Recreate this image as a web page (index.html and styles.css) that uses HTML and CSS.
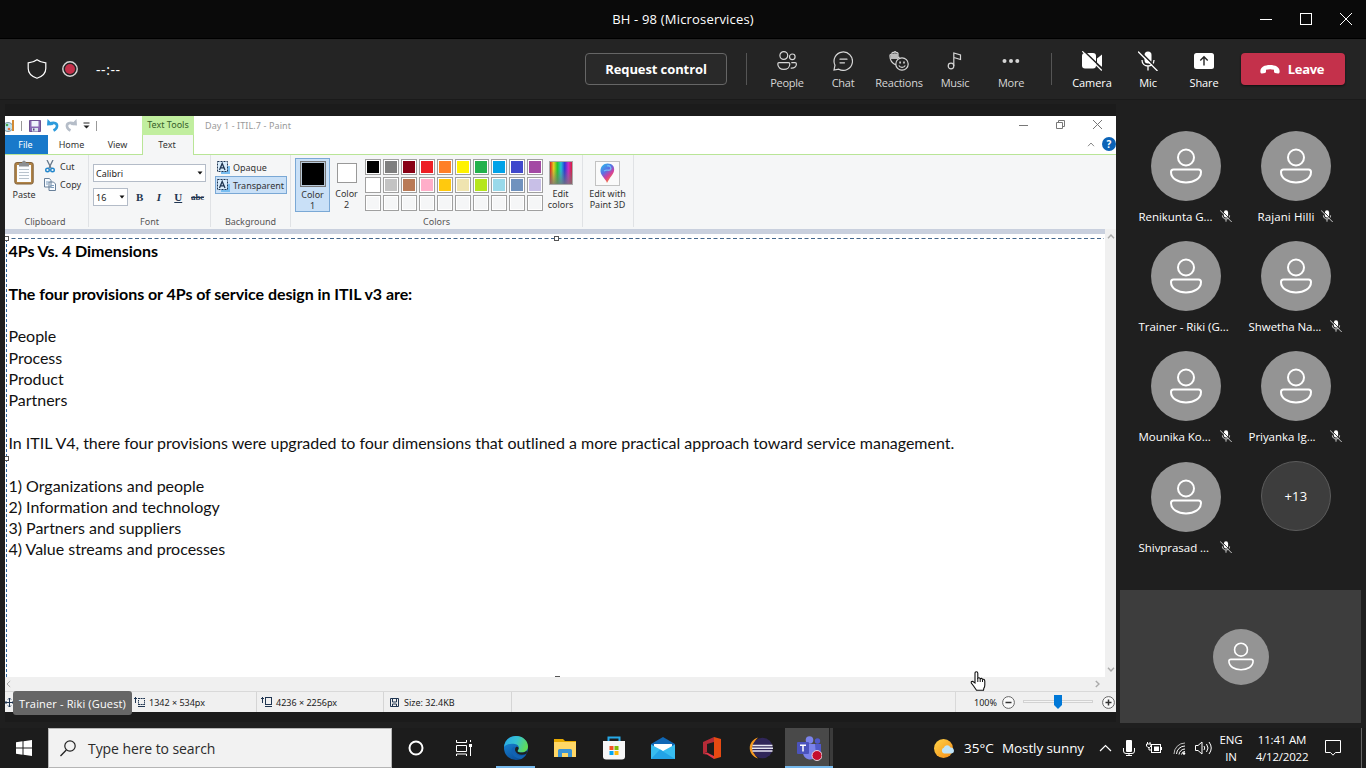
FILE: index.html
```html
<!DOCTYPE html>
<html lang="en">
<head>
<meta charset="utf-8">
<title>BH - 98 (Microservices)</title>
<link rel="stylesheet" href="styles.css">
</head>
<body>
<svg class="defs" width="0" height="0">
  <symbol id="person" viewBox="0 0 32 36"><g fill="none" stroke="#fff" stroke-width="2"><circle cx="16" cy="9.500" r="8"/><path d="M3.500 21.500h25q2.500 0 2.500 2.500c0 6.500-7 10.500-15 10.500S1 30.500 1 24q0-2.500 2.500-2.500z"/></g></symbol>
  <symbol id="micoff" viewBox="0 0 20 20"><rect x="6.500" y="0.500" width="7" height="12" rx="3.500" fill="#fff"/><path d="M4 9c0 8 12 8 12 0M10 15.500V19.500" fill="none" stroke="#fff" stroke-width="1.300"/><path d="M1.500 0L20.500 19" stroke="#242424" stroke-width="1.600"/><path d="M0 0.500L19.500 20" stroke="#fff" stroke-width="1.300"/></symbol>
  <symbol id="dropdown" viewBox="0 0 6 4"><path d="M0.500 0.500h5L3 3.500z" fill="#111"/></symbol>
  <symbol id="bgmode" viewBox="0 0 13 13"><path d="M7 5h6v8H4V9z" fill="#78bdf0"/><rect x="0.500" y="0.500" width="10" height="10" fill="#d9ecfb" stroke="#1f3551" stroke-dasharray="2 1"/><path d="M2.500 9L5.200 2.500L8 9M3.500 6.800h3.500" stroke="#1f3551" stroke-width="1.300" fill="none"/></symbol>
</svg>

<header class="titlebar">
  <div class="title">BH - 98 (Microservices)</div>
  <div class="winbtns">
    <svg width="12" height="12"><path d="M0 6.500h12" stroke="#fff"/></svg>
    <svg width="12" height="12"><rect x="0.500" y="0.500" width="11" height="11" fill="none" stroke="#fff"/></svg>
    <svg width="12" height="12"><path d="M0 0L12 12M12 0L0 12" stroke="#fff"/></svg>
  </div>
</header>

<nav class="toolbar">
  <div class="state">
    <svg width="20" height="20" viewBox="0 0 20 20"><path d="M10 0.800C7.500 2.800 4.500 3.600 1.200 3.800V9.500c0 5 3.500 8 8.800 9.800 5.300-1.800 8.800-4.800 8.800-9.800V3.800C15.500 3.600 12.500 2.800 10 0.800z" fill="none" stroke="#fff" stroke-width="1.200"/></svg>
    <svg width="16" height="16"><circle cx="8" cy="8" r="7.200" fill="none" stroke="#d8d8d8" stroke-width="1.400"/><circle cx="8" cy="8" r="5" fill="#c4314b"/></svg>
    <span class="timer">--:--</span>
  </div>
  <button class="request">Request control</button>
  <i class="vline"></i>
  <div class="tools">
    <div class="tool"><svg width="20" height="20" viewBox="0 0 20 20" fill="none" stroke="#d6d6d6" stroke-width="1.200"><circle cx="6.800" cy="4.500" r="3.900"/><circle cx="15.300" cy="5.800" r="2.800"/><path d="M2 11.600h9.500q1.300 0 1.300 1.300c0 3.400-2.700 5.500-6 5.500s-6-2.100-6-5.500q0-1.300 1.200-1.300zM14.300 11.600h3.800q1.300 0 1.300 1.300c0 3-2.300 4.700-5.700 4.200"/></svg><span>People</span></div>
    <div class="tool"><svg width="20" height="20" viewBox="0 0 20 20" fill="none" stroke="#d6d6d6" stroke-width="1.200" stroke-linecap="round"><path d="M1 19l1-4.800A9.200 9.200 0 1 1 5.800 18.200z"/><path d="M7 8.200h7M7 11.800h4.500"/></svg><span>Chat</span></div>
    <div class="tool"><svg width="20" height="20" viewBox="0 0 20 20" fill="none" stroke="#d6d6d6" stroke-width="1.200"><path d="M7 14C3.500 12.500 1 10 1 5.500V4q1-1.500 2 0V2q1-1.500 2 0V1.200q1.200-1 2 0V2q1.500-1 2 0.500V7l1.500-1"/><path d="M1.500 3h7.500v5H1.500z" fill="#bbb" stroke="none"/><circle cx="13" cy="13" r="6.200"/><path d="M9.800 14.500c1.500 2.500 5 2.500 6.500 0"/><path d="M10.300 11.500h1.600M14.200 11.500h1.600" stroke-width="1.800"/></svg><span>Reactions</span></div>
    <div class="tool"><svg width="20" height="20" viewBox="0 0 20 20" fill="none" stroke="#d6d6d6" stroke-width="1.200"><circle cx="6" cy="15" r="2.800"/><path d="M8.800 15V2l6.700 2v4.500L8.800 6.500"/></svg><span>Music</span></div>
    <div class="tool"><svg width="20" height="20" viewBox="0 0 20 20" fill="#d6d6d6"><circle cx="3.500" cy="10" r="2"/><circle cx="10" cy="10" r="2"/><circle cx="16.300" cy="10" r="2"/></svg><span>More</span></div>
  </div>
  <i class="vline second"></i>
  <div class="tools bright">
    <div class="tool"><svg width="20" height="20" viewBox="0 0 20 20"><rect x="0" y="2" width="14" height="15.500" rx="3" fill="#fff"/><path d="M15 7.500L20 3.500v12.500l-5-3.500z" fill="#fff"/><path d="M1.800 0L20.500 18" stroke="#242424" stroke-width="1.700"/><path d="M0.300 0.300L19.800 19.500" stroke="#fff" stroke-width="1.200"/></svg><span>Camera</span></div>
    <div class="tool"><svg width="20" height="20"><use href="#micoff"/></svg><span>Mic</span></div>
    <div class="tool"><svg width="20" height="20"><rect y="2" width="20" height="16" rx="2.500" fill="#fff"/><path d="M10 14.500V6M6.300 9.500L10 5.800l3.700 3.700" fill="none" stroke="#242424" stroke-width="1.400"/></svg><span>Share</span></div>
  </div>
  <button class="leave"><svg width="20" height="9" viewBox="0 0 20 9"><path d="M0.500 7.500C-0.500 2.500 4 0 10 0s10.500 2.500 9.500 7.500q-.3 1.300-1.500 1l-3-.6q-1-.3-1-1.200V4.800Q10 3.600 6 4.800v1.900q0 .9-1 1.200l-3 .6q-1.200.3-1.500-1z" fill="#fff"/></svg><span>Leave</span></button>
</nav>

<main class="meeting">
  <section class="stage">
    <div class="paint">
      <div class="ptitle">
        <div class="quick">
          <svg width="10" height="14" viewBox="0 0 10 14"><ellipse cx="3" cy="8" rx="5" ry="4.500" fill="#bfe3f0" stroke="#7b95a3"/><circle cx="2" cy="6" r="1.300" fill="#47a84c"/><circle cx="4" cy="10" r="1.300" fill="#e57342"/><path d="M8 1v11" stroke="#d38a35" stroke-width="2"/></svg>
          <i class="tick"></i>
          <svg class="save" width="12" height="12"><path d="M0.500 0.500h11v11h-11z" fill="#8a68b4" stroke="#6d5192"/><path d="M2.500 1h7v5.500h-7z" fill="#eef3fb"/><path d="M3 8h6v3.500H3z" fill="#d8e5ee"/><path d="M4 8.500h1.500v2H4z" fill="#553c7b"/></svg>
          <svg width="12" height="13" viewBox="0 0 12 13"><path d="M2.500 5c5-2.500 8-.5 7.500 2.500-.3 2-1.500 3-3.500 4" fill="none" stroke="#2d9bdc" stroke-width="2.600"/><path d="M0 6.500L0.500 0l6 6z" fill="#2d9bdc"/></svg>
          <svg width="12" height="13" viewBox="0 0 12 13"><path d="M9.500 5c-5-2.500-8-.5-7.500 2.500.3 2 1.500 3 3.500 4" fill="none" stroke="#b5bdc8" stroke-width="2.600"/><path d="M12 6.500L11.500 0 5.500 6z" fill="#b5bdc8"/></svg>
          <svg class="qmore" width="7" height="7"><path d="M0.500 1h6" stroke="#222"/><path d="M0.500 3.500h6L3.500 6.500z" fill="#222"/></svg>
          <i class="tick last"></i>
        </div>
        <div class="tooltab"><span>Text Tools</span></div>
        <div class="docname">Day 1 - ITIL.7 - Paint</div>
        <div class="pbtns">
          <svg width="9" height="9"><path d="M0 5.500h9" stroke="#777"/></svg>
          <svg width="9" height="9"><path d="M0.500 2.500h6v6h-6zM2.500 2.500v-2h6v6h-2" fill="none" stroke="#777"/></svg>
          <svg width="9" height="9"><path d="M0 0l9 9M9 0L0 9" stroke="#777"/></svg>
        </div>
      </div>
      <div class="ptabs">
        <div class="tab file"><span>File</span></div>
        <div class="tab home"><span>Home</span></div>
        <div class="tab view"><span>View</span></div>
        <div class="tab active"><span>Text</span></div>
        <div class="help"><svg width="8" height="5"><path d="M1 4.200L4 1l3 3.200" stroke="#888" fill="none"/></svg><span class="q">?</span></div>
      </div>
      <div class="ribbon">
        <div class="group clip">
          <div class="body">
            <div class="paste"><svg width="20" height="25" viewBox="0 0 20 25"><rect x="0.800" y="2.500" width="18.400" height="21.500" rx="2" fill="#b08346" stroke="#80613a"/><path d="M3 5h14v17H3z" fill="#fbfdff"/><path d="M5 9.500h10M5 12.500h10M5 15.500h10M5 18.500h10" stroke="#b8c3cd"/><path d="M5 3h3q0-2.500 2-2.500T12 3h3v3.500H5z" fill="#8c8f92"/></svg><span>Paste</span></div>
            <div class="cc">
              <div><svg width="12" height="13" viewBox="0 0 12 13"><path d="M3 0l4.500 9M9 0L4.500 9" stroke="#66788a" stroke-width="1.300"/><circle cx="3.500" cy="10" r="1.800" fill="none" stroke="#2387cc" stroke-width="1.400"/><circle cx="8.500" cy="10" r="1.800" fill="none" stroke="#2387cc" stroke-width="1.400"/></svg><span>Cut</span></div>
              <div><svg width="12" height="13" viewBox="0 0 12 13"><path d="M0.500 0.500h5l1.500 2v6.500H0.500zM5 4h4.500l2 2v6.500H5z" fill="#f7fbff" stroke="#68809a"/><path d="M2 4h3M2 6h2M6.500 7.500H10M6.500 9.500H10" stroke="#7f9ebd"/></svg><span>Copy</span></div>
            </div>
          </div><div class="glabel">Clipboard</div>
        </div>
        <div class="group font">
          <div class="body">
            <div class="combo wide"><span>Calibri</span><svg width="6" height="4"><use href="#dropdown"/></svg></div>
            <div class="frow"><div class="combo size"><span>16</span><svg width="6" height="4"><use href="#dropdown"/></svg></div>
            <b class="fb">B</b><b class="fb"><em>I</em></b><b class="fb u">U</b><b class="fb abc">abc</b></div>
          </div><div class="glabel">Font</div>
        </div>
        <div class="group back">
          <div class="body"><div class="mode"><svg width="13" height="13"><use href="#bgmode"/></svg><span>Opaque</span></div><div class="mode on"><svg width="13" height="13"><use href="#bgmode"/></svg><span>Transparent</span></div></div>
          <div class="glabel">Background</div>
        </div>
        <div class="group colors">
          <div class="body">
            <div class="cpick on"><i class="sw1"></i><span>Color<br>1</span></div>
            <div class="cpick second"><i class="sw2"></i><span>Color<br>2</span></div>
            <div class="palette">
              <i style="background:#000"></i><i style="background:#7f7f7f"></i><i style="background:#880015"></i><i style="background:#ed1c24"></i><i style="background:#ff7f27"></i><i style="background:#fff200"></i><i style="background:#22b14c"></i><i style="background:#00a2e8"></i><i style="background:#3f48cc"></i><i style="background:#a349a4"></i>
              <i style="background:#fff"></i><i style="background:#c3c3c3"></i><i style="background:#b97a57"></i><i style="background:#ffaec9"></i><i style="background:#ffc90e"></i><i style="background:#efe4b0"></i><i style="background:#b5e61d"></i><i style="background:#99d9ea"></i><i style="background:#7092be"></i><i style="background:#c8bfe7"></i>
              <i></i><i></i><i></i><i></i><i></i><i></i><i></i><i></i><i></i><i></i>
            </div>
            <div class="edit"><i class="rainbow"></i><span>Edit<br>colors</span></div>
          </div><div class="glabel">Colors</div>
        </div>
        <div class="group p3d">
          <div class="edit"><svg width="25" height="25"><defs><linearGradient id="drop" x1="0" y1="0" x2="0.600" y2="1"><stop offset="0" stop-color="#24c5ed"/><stop offset="0.450" stop-color="#5b6fe4"/><stop offset="0.700" stop-color="#d13f9d"/><stop offset="1" stop-color="#ff7d2b"/></linearGradient></defs><rect x="0.500" y="0.500" width="24" height="24" fill="#fafafa" stroke="#c2c2c2"/><path d="M12.500 2.500c5 0 7.500 3.500 6.500 7.500-1 4-4 6-7 12-.5-3-6-7-6.500-11.500-.3-5 3-8 7-8z" fill="url(#drop)"/><path d="M12 5c3-1 5 2 3 4-2 1-3-1-6 1" fill="none" stroke="#7ad9ff" stroke-width="1.300" opacity=".7"/></svg><span>Edit with<br>Paint 3D</span></div>
        </div>
      </div>
      <div class="work">
        <div class="canvas">
          <div class="band"></div>
          <div class="page">
            <svg class="marquee" width="1099" height="443"><path d="M0 4.500h1099" stroke="#41658b" stroke-dasharray="4 2.500"/><path d="M1.500 5v438" stroke="#2c66a0" stroke-dasharray="3 2"/><g fill="#fff" stroke="#555"><rect x="-0.500" y="2.500" width="4" height="4"/><rect x="549.500" y="2.500" width="4" height="4"/><rect x="-0.500" y="222.500" width="4" height="4"/><path d="M550 442.500h5"/></g></svg>
            <div class="doc"><p class="bold">4Ps Vs. 4 Dimensions</p><p>&nbsp;</p><p class="bold">The four provisions or 4Ps of service design in ITIL v3 are:</p><p>&nbsp;</p><p>People</p><p>Process</p><p>Product</p><p>Partners</p><p>&nbsp;</p><p>In ITIL V4, there four provisions were upgraded to four dimensions that outlined a more practical approach toward service management.</p><p>&nbsp;</p><p>1) Organizations and people</p><p>2) Information and technology</p><p>3) Partners and suppliers</p><p>4) Value streams and processes</p></div>
          </div>
        </div>
        <div class="vscroll"><svg width="8" height="5"><path d="M1 4.200L4 1l3 3.200" stroke="#aaa" stroke-width="1.400" fill="none"/></svg><svg width="8" height="5"><path d="M1 0.800L4 4l3-3.200" stroke="#aaa" stroke-width="1.400" fill="none"/></svg></div>
      </div>
      <div class="hscroll"><svg width="5" height="8"><path d="M4.200 1L1 4l3.200 3" stroke="#aaa" fill="none"/></svg><svg width="5" height="8"><path d="M0.800 1L4 4 0.800 7" stroke="#aaa" stroke-width="1.400" fill="none"/></svg></div>
      <div class="pstatus">
        <div class="cell c1"><svg width="9" height="9"><path d="M4.500 0v9M0 4.500h9M3 1.500L4.500 0 6 1.500M3 7.500L4.500 9 6 7.500M1.500 3L0 4.500 1.500 6M7.500 3L9 4.500 7.500 6" fill="none" stroke="#1f3551"/></svg></div>
        <div class="cell c2"><svg width="11" height="11"><path d="M1.500 0v6M0 2l1.500-1.500L3 2M4 9.500h7" fill="none" stroke="#1f3551"/><path d="M4 1.500h7M4 7.500h7" stroke="#1f3551" stroke-dasharray="2 0.600"/><path d="M4.500 3v3.500M10.500 3v3.500" stroke="#1f3551" stroke-dasharray="1.500 0.700"/></svg><span>1342 × 534px</span></div>
        <div class="cell c3"><svg width="11" height="11"><path d="M1.500 0v6M0 2l1.500-1.500L3 2M4 9.500h7" fill="none" stroke="#1f3551"/><rect x="4.500" y="0.500" width="6" height="7" fill="none" stroke="#1f3551"/></svg><span>4236 × 2256px</span></div>
        <div class="cell c4"><svg width="9" height="9"><path d="M0.500 0.500h8v8h-8zM2.500 1v3h4V1M2.500 8.500V6h4v2.500" fill="none" stroke="#1f3551"/></svg><span>Size: 32.4KB</span></div>
        <div class="zoom"><span>100%</span><svg width="13" height="13"><circle cx="6.500" cy="6.500" r="5.900" fill="#fafafa" stroke="#666"/><path d="M3.500 6.500h6" stroke="#333" stroke-width="1.500"/></svg><svg width="70" height="14"><rect x="0.500" y="5.500" width="69" height="2" fill="#f4f4f4" stroke="#d2d2d2"/><path d="M31 0h8v10l-4 4-4-4z" fill="#0078d7"/></svg><svg width="13" height="13"><circle cx="6.500" cy="6.500" r="5.900" fill="#fafafa" stroke="#666"/><path d="M3.500 6.500h6M6.500 3.500v6" stroke="#333" stroke-width="1.500"/></svg></div>
      </div>
    </div>
    <div class="presenter"><span>Trainer - Riki (Guest)</span></div>
    <svg class="hand" width="16" height="20" viewBox="0 0 16 20"><path d="M5 12V2.300q0-1.600 1.400-1.600T7.800 2.300V7.200q1.400-1.200 2.400.5 1.500-.9 2.300.6 2-.5 2.300 1.700v4q0 2-1 3.400l-.3 1.900H6.500L3.600 15 1.300 12q-.4-1.800 1.300-1.800z" fill="#fff" stroke="#111" stroke-width="1.100"/><path d="M7.800 7v4M10.200 8v3M12.500 8.500V11" stroke="#111"/></svg>
  </section>

  <aside class="roster">
    <div class="people">
      <div class="p"><div class="av"><svg width="32" height="36"><use href="#person"/></svg></div><div class="nm"><span>Renikunta G...</span><svg width="12" height="12"><use href="#micoff"/></svg></div></div>
      <div class="p"><div class="av"><svg width="32" height="36"><use href="#person"/></svg></div><div class="nm mid"><span>Rajani Hilli</span><svg width="12" height="12"><use href="#micoff"/></svg></div></div>
      <div class="p"><div class="av"><svg width="32" height="36"><use href="#person"/></svg></div><div class="nm"><span>Trainer - Riki (G...</span></div></div>
      <div class="p"><div class="av"><svg width="32" height="36"><use href="#person"/></svg></div><div class="nm"><span>Shwetha Na...</span><svg width="12" height="12"><use href="#micoff"/></svg></div></div>
      <div class="p"><div class="av"><svg width="32" height="36"><use href="#person"/></svg></div><div class="nm"><span>Mounika Ko...</span><svg width="12" height="12"><use href="#micoff"/></svg></div></div>
      <div class="p"><div class="av"><svg width="32" height="36"><use href="#person"/></svg></div><div class="nm"><span>Priyanka Ig...</span><svg width="12" height="12"><use href="#micoff"/></svg></div></div>
      <div class="p lastrow"><div class="av"><svg width="32" height="36"><use href="#person"/></svg></div><div class="nm"><span>Shivprasad ...</span><svg width="12" height="12"><use href="#micoff"/></svg></div></div>
      <div class="p"><div class="av more">+13</div></div>
    </div>
    <div class="self"><div class="av small"><svg width="26" height="29"><use href="#person"/></svg></div></div>
  </aside>
</main>

<footer class="taskbar">
  <div class="start"><svg width="16" height="16"><path d="M0 2.300L6.500 1.300V7.500H0zM7.500 1.200L16 0v7.500H7.500zM0 8.500h6.500v6.200L0 13.800zM7.500 8.500H16V16l-8.500-1.200z" fill="#fff"/></svg></div>
  <div class="search"><svg width="16" height="17"><circle cx="10" cy="6" r="5.200" fill="none" stroke="#222" stroke-width="1.200"/><path d="M6.300 10L0.500 16" stroke="#222" stroke-width="1.300"/></svg><span>Type here to search</span></div>
  <div class="app cortana"><svg width="16" height="16"><circle cx="8" cy="8" r="6.500" fill="none" stroke="#fff" stroke-width="2"/></svg></div>
  <div class="app taskview"><svg width="16" height="16"><path d="M0.500 0v2.500h10V0M0.500 5.500h10v6H0.500zM0.500 16v-2h10v2M14.500 5v11M14.500 0v2" fill="none" stroke="#fff"/><path d="M13 4h3v3h-3z" fill="#fff"/></svg></div>
  <div class="app under"><svg width="24" height="24" viewBox="0 0 24 24"><defs><linearGradient id="eg" x1="0" y1="0.200" x2="1" y2="0.500"><stop offset="0" stop-color="#29a9e8"/><stop offset="0.500" stop-color="#36c2d2"/><stop offset="1" stop-color="#62dc52"/></linearGradient><linearGradient id="eb" x1="0" y1="0" x2="0.500" y2="1"><stop offset="0" stop-color="#1b8fe0"/><stop offset="1" stop-color="#0b509b"/></linearGradient></defs><circle cx="12" cy="12" r="12" fill="url(#eb)"/><path d="M0 11C.5 4 6 0 12 0c7 0 12 5 12 10.500 0 5-4.500 6.500-8 6-2.500-.3-3-1.500-2-2.500 2-2.500.5-5.500-3-6C6 7 2 8.500 0 11z" fill="url(#eg)"/><path d="M11 11c-2.500 4 1 9 6 8.700 2.500 0 3.800-.7 5.200-1.400-1.200 2.200-3 3.800-5.200 4.700C10.500 22.500 6 17 8 12.500q1-2 3-1.500z" fill="#1262b3"/><path d="M22.800 17.500c-5 2.500-10 1-11.500-2.500-.5-1.500-.2-3 .7-4 2-.8 3.500 1 2 3-1 1-.5 2.200 2 2.500 2.500.3 5-.3 6.800-1.800z" fill="#1f1f1f"/></svg></div>
  <div class="app"><svg width="22" height="20" viewBox="0 0 22 20"><path d="M0 1h9l2 2h11v16H0z" fill="#e7a900"/><path d="M0 4h22v15H0z" fill="#ffd766"/><path d="M4 19v-6.500q0-1.500 1.500-1.500h11q1.500 0 1.500 1.500V19h-4v-4H8v4z" fill="#3c94d4"/></svg></div>
  <div class="app"><svg width="24" height="24" viewBox="0 0 24 24"><path d="M6.500 6V1.500h11V6" fill="none" stroke="#26a9e8" stroke-width="2"/><path d="M1 5h22v15.500q0 3-3 3H4q-3 0-3-3z" fill="#f6f6f6"/><path d="M7.500 10h4v4h-4z" fill="#f35325"/><path d="M12.500 10h4v4h-4z" fill="#81bc06"/><path d="M7.500 15h4v4h-4z" fill="#05a6f0"/><path d="M12.500 15h4v4h-4z" fill="#ffba08"/></svg></div>
  <div class="app"><svg width="24" height="22" viewBox="0 0 24 22"><path d="M0 7L12 0l12 7v15H0z" fill="#1067b5"/><path d="M3 7h18v9H3z" fill="#fff"/><path d="M0 7.500L12 14l12-6.500V22H0z" fill="#38bdf0"/><path d="M24 22L9 12.500 0 22z" fill="#23a3e6"/></svg></div>
  <div class="app"><svg width="18" height="22" viewBox="0 0 18 22"><path d="M11 0L0 5v12l4-2V7l7-2z" fill="#b52b37"/><path d="M11 0l7 2v18l-7 2V0z" fill="#e64a12"/><path d="M4 17.500L11 22V19l-7-3.500L0 17z" fill="#e23648"/></svg></div>
  <div class="app"><svg width="24" height="22" viewBox="0 0 24 22"><path d="M9 0.500C-2 4-2 18 9 21.500 3 16 3 6 9 .5z" fill="#f79a21"/><circle cx="13.500" cy="11" r="10.300" fill="#302659"/><path d="M3.500 8.500h20M3 11.300h21M3.500 14h20" stroke="#e9e8f4" stroke-width="1.600"/></svg></div>
  <div class="app teams"><svg width="25" height="25" viewBox="0 0 25 25"><circle cx="12.500" cy="4" r="3.800" fill="#7b83eb"/><circle cx="20.500" cy="5" r="2.700" fill="#5059c9"/><path d="M7 8h13v10q-3 6-8 5.500Q6 22 6 16z" fill="#7b83eb"/><path d="M18 8h6v9q-2 3-5 2z" fill="#5059c9"/><rect y="6" width="12" height="12" rx="1" fill="#4b53bc"/><path d="M3 9.200h6M6 9v6.500" stroke="#fff" stroke-width="1.500"/><circle cx="20" cy="19.500" r="5" fill="#c50f2e" stroke="#e9d5df"/></svg></div>
  <div class="weather"><svg width="21" height="19" viewBox="0 0 21 19"><defs><linearGradient id="sun" x1="0" y1="0" x2="1" y2="1"><stop offset="0" stop-color="#ffd448"/><stop offset="1" stop-color="#f48b16"/></linearGradient></defs><circle cx="9.500" cy="9.500" r="9.500" fill="url(#sun)"/><path d="M10 14.500a3 3 0 0 1-.2-5.700 3.500 3.500 0 0 1 6.600-.3 3 3 0 0 1 1 6z" fill="#c0e4f8"/></svg><span class="temp">35°C</span><span class="sky">Mostly sunny</span></div>
  <div class="tray">
    <svg width="13" height="8"><path d="M1 7L6.500 1.500 12 7" stroke="#fff" stroke-width="1.200" fill="none"/></svg>
    <svg width="12" height="16"><rect x="3" width="6" height="12" rx="1" fill="#fff"/><path d="M0.500 8v3q0 2.500 2.500 2.500h6q2.500 0 2.500-2.500V8M6 13.500V16M3 15.500h6" fill="none" stroke="#fff"/></svg>
    <svg width="16" height="12"><rect x="5.500" y="2.500" width="9" height="8" fill="none" stroke="#fff"/><path d="M14.500 5h1.500v3h-1.500zM8 4.500h5v4.500H8z" fill="#fff"/><path d="M1.500 0v2M4 0v2M0.500 2h4.500v2L3.500 5.500H2L0.500 4zM3 5.500V8h2.500" fill="none" stroke="#fff"/></svg>
    <svg width="13" height="13"><path d="M1 12A11 11 0 0 1 12 1" fill="none" stroke="#bbb"/><path d="M3.500 12A8.500 8.500 0 0 1 12 4M6 12.500A6 6 0 0 1 12 7M8.500 12.500A3.500 3.500 0 0 1 12 9.500" fill="none" stroke="#fff"/><circle cx="11" cy="11.500" r="1.300" fill="#fff"/></svg>
    <svg class="vol" width="17" height="14"><path d="M0.500 4.500h2.500l4-3.500v12L3 9.500H.5z" fill="none" stroke="#fff"/><path d="M9 5q1.500 2 0 4M11.500 3q3 4 0 8M14 1q4.500 6 0 12" fill="none" stroke="#fff"/></svg>
  </div>
  <div class="lang"><span>ENG</span><span>IN</span></div>
  <div class="clock"><span>11:41 AM</span><span>4/12/2022</span></div>
  <div class="notes"><svg width="16" height="16"><path d="M0.500 0.500h15v12h-5L8 15.200 5.500 12.500h-5z" fill="none" stroke="#fff"/></svg><i class="desk"></i></div>
</footer>
</body>
</html>
```
FILE: styles.css
```css
* { box-sizing: border-box; }
body { margin: 0; width: 1366px; height: 768px; overflow: hidden; background: #1f1f1f; color: #fff; font: 12px "Open Sans", "Noto Sans", sans-serif; display: flex; flex-direction: column; }
svg { display: block; flex: none; }
span { white-space: nowrap; }
p { margin: 0; }
button { font: inherit; color: inherit; padding: 0; }
.defs { position: absolute; }

.titlebar { height: 39px; flex: none; background: #0a0a0a; border-bottom: 1px solid #000; display: grid; grid-template-columns: 1fr; align-items: center; }
.title { grid-area: 1 / 1; text-align: center; font-size: 13px; letter-spacing: 0.180px; }
.winbtns { grid-area: 1 / 1; justify-self: end; display: flex; gap: 28px; padding-right: 14px; }

.toolbar { height: 60px; flex: none; background: #242424; display: flex; align-items: center; box-shadow: 0 1px 0 #1a1a1a; }
.state { width: 585px; display: flex; align-items: center; padding-left: 27px; gap: 15px; }
.timer { margin-left: 3px; font-size: 14px; letter-spacing: 0.600px; }
.request { width: 142px; height: 32px; border: 1px solid #666; border-radius: 4px; background: #292929; font-size: 13px; font-weight: 700; letter-spacing: -0.100px; }
.vline { width: 1px; height: 32px; background: #555; margin: 0 12px 0 19px; }
.vline.second { margin: 0 12px; }
.tools { display: flex; color: #d6d6d6; }
.bright { color: #fff; }
.tool { width: 56px; display: flex; flex-direction: column; align-items: center; gap: 4px; font-size: 11px; line-height: 16px; letter-spacing: -0.250px; padding-top: 3px; }
.bright .tool { letter-spacing: -0.100px; }
.leave { width: 104px; height: 32px; margin-left: 9px; border: 0; border-radius: 4px; background: #c4314b; display: flex; align-items: center; justify-content: center; gap: 8px; font-size: 13px; font-weight: 700; letter-spacing: -0.300px; box-shadow: 0 1px 2px #111; padding-right: 2px; }

.meeting { height: 629px; flex: none; display: flex; }
.stage { position: relative; width: 1111px; height: 618px; margin: 5px 4px 0 5px; padding-top: 12px; background: #1b1b1b; }
.paint { height: 596px; background: #fff; color: #333; font: 9px/11px "Noto Sans", sans-serif; display: flex; flex-direction: column; }
.ptitle { height: 19px; flex: none; display: flex; }
.quick { width: 137px; display: flex; align-items: center; gap: 6px; }
.tick { width: 1px; height: 10px; background: #999; }
.save { margin-left: 1px; }
.tick.last { margin-left: 0; }
.tooltab { width: 52px; background: #c1ee9f; color: #36612a; text-align: center; line-height: 17px; }
.docname { margin-left: 11px; color: #999; line-height: 20px; white-space: nowrap; letter-spacing: 0.100px; }
.pbtns { margin-left: auto; display: flex; gap: 28px; padding: 4px 14px 0 0; }
.ptabs { height: 20px; flex: none; display: flex; border-bottom: 1px solid #b9e597; }
.tab { text-align: center; line-height: 19px; }
.file { width: 43px; background: #1979ca; color: #fff; padding-right: 2px; }
.home { width: 47px; }
.view { width: 47px; padding-right: 2px; }
.active { width: 52px; background: #f5f6f7; border: 1px solid #b9e597; border-width: 0 1px; height: 20px; padding-right: 2px; }
.help { margin-left: auto; display: flex; align-items: center; gap: 7px; height: 18px; }
.q { width: 14px; height: 14px; border-radius: 50%; background: #0b63b7; color: #fff; font-weight: 700; font-size: 10px; line-height: 14px; text-align: center; }

.ribbon { height: 74px; flex: none; background: #f5f6f7; display: flex; }
.group { height: 72px; border-right: 1px solid #e0e2e5; display: flex; flex-direction: column; }
.body { height: 61px; flex: none; }
.glabel { text-align: center; color: #555; line-height: 12px; }
.clip { width: 84px; }
.clip .glabel { padding-right: 3px; }
.clip .body { display: flex; padding: 5px 0 0 8px; }
.paste { width: 22px; display: flex; flex-direction: column; align-items: center; gap: 4px; }
.cc { margin-left: 9px; }
.cc div { display: flex; align-items: center; gap: 4px; height: 18px; }
.cc div:first-child { height: 16px; margin: -2px 0 1px; }
.font { width: 122px; }
.font .body { padding: 9px 0 0 4px; }
.combo { height: 18px; border: 1px solid #b4bcc8; background: #fff; display: flex; align-items: center; justify-content: space-between; padding: 0 2px 0 2px; color: #222; }
.wide { width: 113px; }
.frow { display: flex; align-items: center; margin-top: 6px; }
.size { width: 35px; margin-right: 2px; }
.fb { width: 19.300px; text-align: center; font: bold 11px/13px "Liberation Serif", serif; color: #1f3551; }
.u { text-decoration: underline; }
.abc { font-size: 9px; text-decoration: line-through; letter-spacing: -0.200px; }
.back { width: 80px; }
.back .body { padding: 3px 0 0 4px; }
.mode { width: 72px; height: 18px; display: flex; align-items: center; gap: 3px; padding-left: 1px; border: 1px solid transparent; }
.mode.on { background: #c9e0f7; border-color: #7aa8d5; }
.colors { width: 292px; }
.colors .body { display: flex; padding-left: 4px; }
.cpick { width: 35px; height: 54px; margin-top: 3px; display: flex; flex-direction: column; align-items: center; text-align: center; line-height: 10.500px; padding-top: 8px; gap: 5px; }
.cpick.on { background: #c9e0f7; border: 1px solid #7aa8d5; padding-top: 2px; gap: 3px; }
.cpick.second { padding-right: 2px; }
.sw1 { width: 26px; height: 26px; background: #000; border: 1px solid #777; box-shadow: inset 0 0 0 1px #b8c8d8; }
.sw2 { width: 20px; height: 20px; background: #fff; border: 1px solid #999; flex: none; margin-top: -3px; }
.cpick.second span { margin-top: 1px; }
.palette { display: grid; grid-template-columns: repeat(10, 16px); grid-auto-rows: 16px; gap: 2px; margin: 4px 0 0; }
.palette i { border: 1px solid #a0a0a0; box-shadow: inset 0 0 0 1px #fff; }
.edit { display: flex; flex-direction: column; align-items: center; gap: 4px; text-align: center; line-height: 10.500px; padding-top: 6px; width: 35px; }
.rainbow { width: 24px; height: 24px; border: 1px solid #aaa; background: linear-gradient(0deg, #777c, transparent 70%), linear-gradient(90deg, #d52020, #e8d020, #25c52b, #22c0d5, #2938d5, #cc29c7, #d52038); flex: none; }
.p3d { width: 51px; }
.p3d .edit { width: 49px; gap: 3px; }

.work { height: 448px; flex: none; display: flex; }
.canvas { width: 1100px; }
.band { height: 5px; background: #c9d0de; }
.page { position: relative; height: 443px; background: #fff; }
.marquee { position: absolute; left: 0; top: 0; }
.doc { padding: 6.300px 0 0 3.500px; color: #111; font: 16px/21.300px Lato, sans-serif; white-space: nowrap; letter-spacing: -0.020px; font-variant-ligatures: none; }
.bold { font-weight: 700; color: #000; letter-spacing: -0.060px; }
.vscroll { width: 11px; background: #f0f0f0; display: flex; flex-direction: column; justify-content: space-between; align-items: center; padding: 5px 0; }
.hscroll { height: 14px; flex: none; background: #f0f0f0; display: flex; align-items: center; justify-content: space-between; padding: 0 16px 0 1px; }
.pstatus { height: 21px; flex: none; background: #f0f0f0; border-top: 1px solid #d9d9d9; display: flex; align-items: center; color: #222; }
.cell { height: 20px; display: flex; align-items: center; gap: 4px; border-right: 1px solid #d5d5d5; }
.c1 { width: 128px; border: 0; }
.c2 { width: 124px; padding-left: 1px; }
.c3 { width: 127px; padding-left: 4px; }
.c4 { width: 128px; padding-left: 6px; gap: 5px; }
.zoom { margin-left: auto; width: 161px; height: 20px; border-left: 1px solid #d9d9d9; display: flex; align-items: center; justify-content: flex-end; gap: 8px; padding-right: 1px; }
.zoom span { margin-right: -3px; }
.zoom svg:last-child { margin-left: 1px; }
.presenter { position: absolute; left: 8px; top: 587px; width: 119px; height: 24px; background: #666; border-radius: 3px; display: flex; align-items: center; justify-content: center; font-size: 11px; letter-spacing: 0.150px; }
.hand { position: absolute; left: 965px; top: 567px; }

.roster { width: 241px; display: flex; flex-direction: column; }
.people { height: 491px; display: grid; grid-template-columns: 110px 110px; grid-auto-rows: 110px; padding: 32px 0 0 11px; }
.p { display: flex; flex-direction: column; align-items: center; gap: 6px; }
.lastrow { padding-top: 1px; }
.av { width: 70px; height: 70px; border-radius: 50%; background: #949494; display: flex; align-items: center; justify-content: center; flex: none; }
.av.more { background: #3d3d3d; border: 1px solid #5c5c5c; font-size: 13px; letter-spacing: 0.300px; }
.nm { width: 95px; height: 18px; display: flex; align-items: center; justify-content: space-between; padding-right: 2px; font-size: 11.500px; letter-spacing: -0.040px; }
.nm.mid { width: 77px; letter-spacing: 0.100px; }
.self { height: 133px; background: #3d3d3d; display: flex; align-items: center; justify-content: center; }
.av.small { width: 56px; height: 56px; }

.taskbar { height: 40px; flex: none; background: #1c1c1c; display: flex; }
.start { width: 48px; display: flex; align-items: center; justify-content: center; }
.search { width: 344px; background: #f2f2f2; border: 1px solid #b5b5b5; color: #2b2b2b; display: flex; align-items: center; gap: 12px; padding-left: 11px; font-size: 14px; letter-spacing: -0.080px; }
.app { width: 49px; display: flex; align-items: center; justify-content: center; }
.cortana { width: 48px; }
.taskview { width: 51px; padding-right: 4px; }
.under { background: linear-gradient(#76b9ed, #76b9ed) center bottom / 39px 2px no-repeat; }
.teams { width: 48px; background: linear-gradient(#76b9ed, #76b9ed) bottom / 100% 2px no-repeat, linear-gradient(90deg, #494949 44px, #222 44px, #222 45px, #3b3b3b 45px); }
.weather { margin-left: 101px; width: 165px; display: flex; align-items: center; font-size: 13.500px; }
.temp { margin-left: 9px; width: 38px; }
.sky { letter-spacing: -0.100px; }
.tray { display: flex; align-items: center; gap: 11px; width: 120px; }
.vol { margin-left: -2px; }
.lang, .clock { display: flex; flex-direction: column; align-items: center; font-size: 11.500px; line-height: 17px; padding-top: 3px; letter-spacing: -0.200px; }
.lang { width: 24px; }
.clock { width: 78px; }
.notes { display: flex; align-items: center; flex: 1; justify-content: flex-end; }
.desk { width: 1px; height: 40px; background: #666; margin: 0 4px 0 20px; }
```
